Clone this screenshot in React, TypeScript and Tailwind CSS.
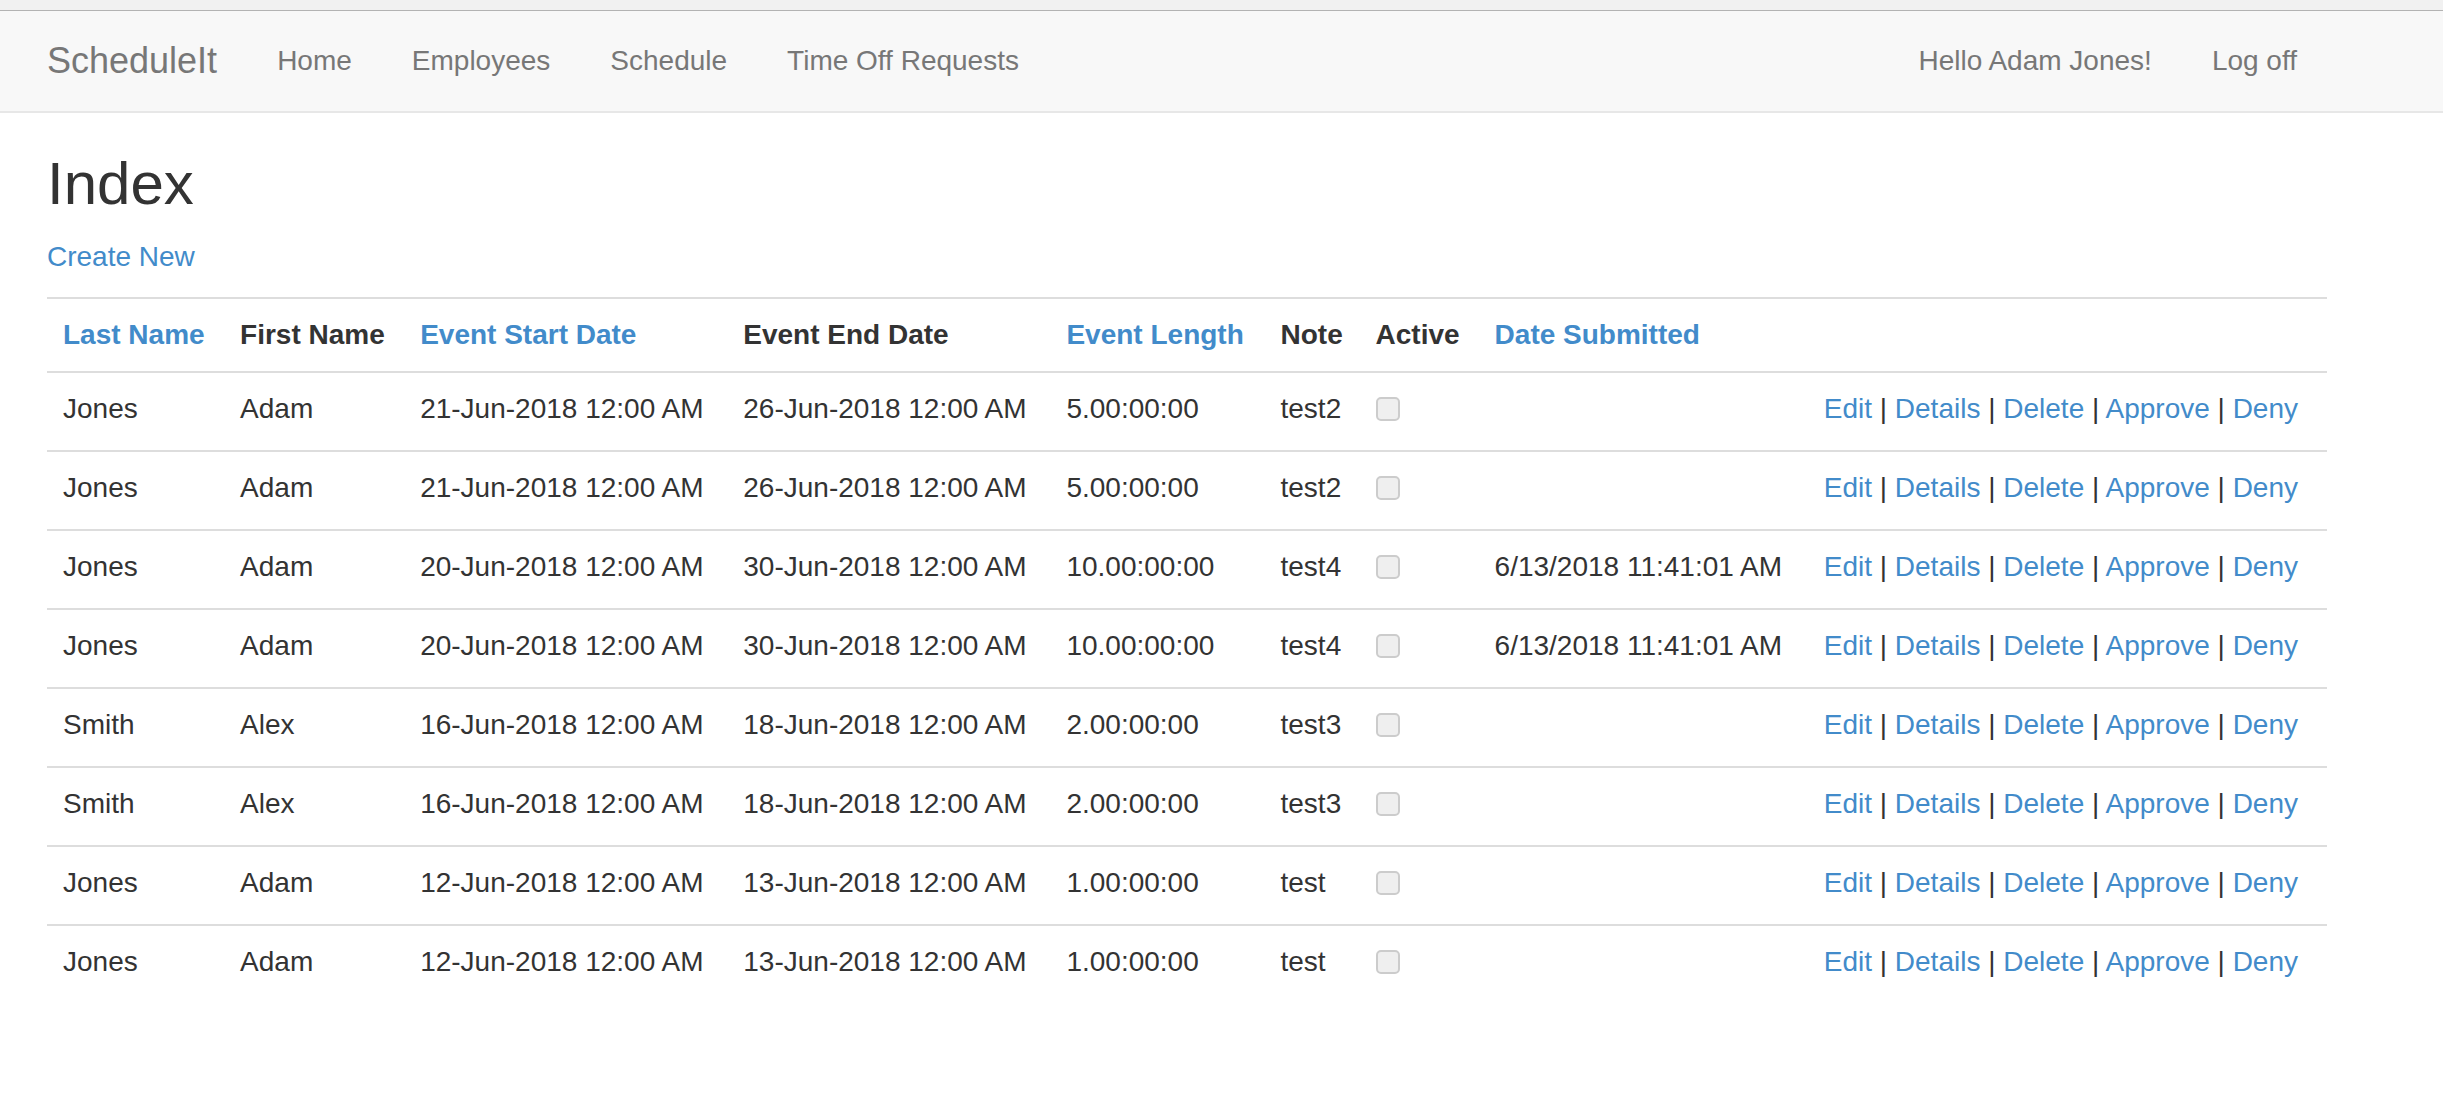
import React from 'react';

interface Request {
  last: string;
  first: string;
  start: string;
  end: string;
  length: string;
  note: string;
  submitted: string;
}

const ROWS: Request[] = [
  { last: 'Jones', first: 'Adam', start: '21-Jun-2018 12:00 AM', end: '26-Jun-2018 12:00 AM', length: '5.00:00:00', note: 'test2', submitted: '' },
  { last: 'Jones', first: 'Adam', start: '21-Jun-2018 12:00 AM', end: '26-Jun-2018 12:00 AM', length: '5.00:00:00', note: 'test2', submitted: '' },
  { last: 'Jones', first: 'Adam', start: '20-Jun-2018 12:00 AM', end: '30-Jun-2018 12:00 AM', length: '10.00:00:00', note: 'test4', submitted: '6/13/2018 11:41:01 AM' },
  { last: 'Jones', first: 'Adam', start: '20-Jun-2018 12:00 AM', end: '30-Jun-2018 12:00 AM', length: '10.00:00:00', note: 'test4', submitted: '6/13/2018 11:41:01 AM' },
  { last: 'Smith', first: 'Alex', start: '16-Jun-2018 12:00 AM', end: '18-Jun-2018 12:00 AM', length: '2.00:00:00', note: 'test3', submitted: '' },
  { last: 'Smith', first: 'Alex', start: '16-Jun-2018 12:00 AM', end: '18-Jun-2018 12:00 AM', length: '2.00:00:00', note: 'test3', submitted: '' },
  { last: 'Jones', first: 'Adam', start: '12-Jun-2018 12:00 AM', end: '13-Jun-2018 12:00 AM', length: '1.00:00:00', note: 'test', submitted: '' },
  { last: 'Jones', first: 'Adam', start: '12-Jun-2018 12:00 AM', end: '13-Jun-2018 12:00 AM', length: '1.00:00:00', note: 'test', submitted: '' },
];

const ACTIONS = ['Edit', 'Details', 'Delete', 'Approve', 'Deny'];

const th = 'text-left font-bold px-[16px] py-[16px] leading-[40px] align-top border-t-2 border-[#dddddd]';
const td = 'px-[16px] pt-[16px] pb-[21px] leading-[40px] align-top border-t-2 border-[#dddddd] whitespace-nowrap';

export default function App() {
  return (
    <div className="min-h-screen bg-white text-[#333333] text-[28px] font-['Liberation_Sans',Arial,sans-serif]">
      {/* browser strip */}
      <div className="h-[11px] bg-[#f1f1f1] border-b border-[#b3b3b3]" />

      {/* Navbar */}
      <nav className="h-[102px] bg-[#f8f8f8] border-b-2 border-[#e7e7e7]">
        <div className="ml-[17px] w-[2340px] px-[30px] flex items-start">
          <a className="-ml-[30px] px-[30px] py-[30px] text-[36px] leading-[40px] text-[#777777]">ScheduleIt</a>
          <ul className="flex">
            {['Home', 'Employees', 'Schedule', 'Time Off Requests'].map((l) => (
              <li key={l}>
                <a className="block px-[30px] py-[30px] leading-[40px] text-[#777777]">{l}</a>
              </li>
            ))}
          </ul>
          <ul className="flex ml-auto">
            <li>
              <a className="block px-[30px] py-[30px] leading-[40px] text-[#777777]">Hello Adam Jones!</a>
            </li>
            <li>
              <a className="block px-[30px] py-[30px] leading-[40px] text-[#777777]">Log off</a>
            </li>
          </ul>
        </div>
      </nav>

      <main className="ml-[17px] w-[2340px] px-[30px]">
        <h2 className="mt-[38px] mb-[20px] text-[60px] leading-[66px] font-normal">Index</h2>
        <p className="mb-[20px] leading-[40px]">
          <a className="text-[#428bca]">Create New</a>
        </p>

        <table className="w-[2280px] table-fixed border-collapse mb-[40px]">
          <colgroup>
            <col className="w-[177px]" />
            <col className="w-[180px]" />
            <col className="w-[323px]" />
            <col className="w-[323px]" />
            <col className="w-[214px]" />
            <col className="w-[95px]" />
            <col className="w-[119px]" />
            <col className="w-[329px]" />
            <col className="w-[519px]" />
          </colgroup>
          <tbody>
            <tr>
              <th className={th}><a className="text-[#428bca]">Last Name</a></th>
              <th className={th}>First Name</th>
              <th className={th}><a className="text-[#428bca]">Event Start Date</a></th>
              <th className={th}>Event End Date</th>
              <th className={th}><a className="text-[#428bca]">Event Length</a></th>
              <th className={th}>Note</th>
              <th className={th}>Active</th>
              <th className={th}><a className="text-[#428bca]">Date Submitted</a></th>
              <th className={th}></th>
            </tr>
            {ROWS.map((r, i) => (
              <tr key={i}>
                <td className={td}>{r.last}</td>
                <td className={td}>{r.first}</td>
                <td className={td}>{r.start}</td>
                <td className={td}>{r.end}</td>
                <td className={td}>{r.length}</td>
                <td className={td}>{r.note}</td>
                <td className={td}>
                  <span className="inline-block align-top mt-[8px] w-[24px] h-[24px] rounded-[5px] border-2 border-[#cccccc] bg-[#efefef]" />
                </td>
                <td className={td}>{r.submitted}</td>
                <td className={td}>
                  {ACTIONS.map((a, j) => (
                    <React.Fragment key={a}>
                      {j > 0 && ' | '}
                      <a className="text-[#428bca]">{a}</a>
                    </React.Fragment>
                  ))}
                </td>
              </tr>
            ))}
          </tbody>
        </table>
      </main>
    </div>
  );
}
